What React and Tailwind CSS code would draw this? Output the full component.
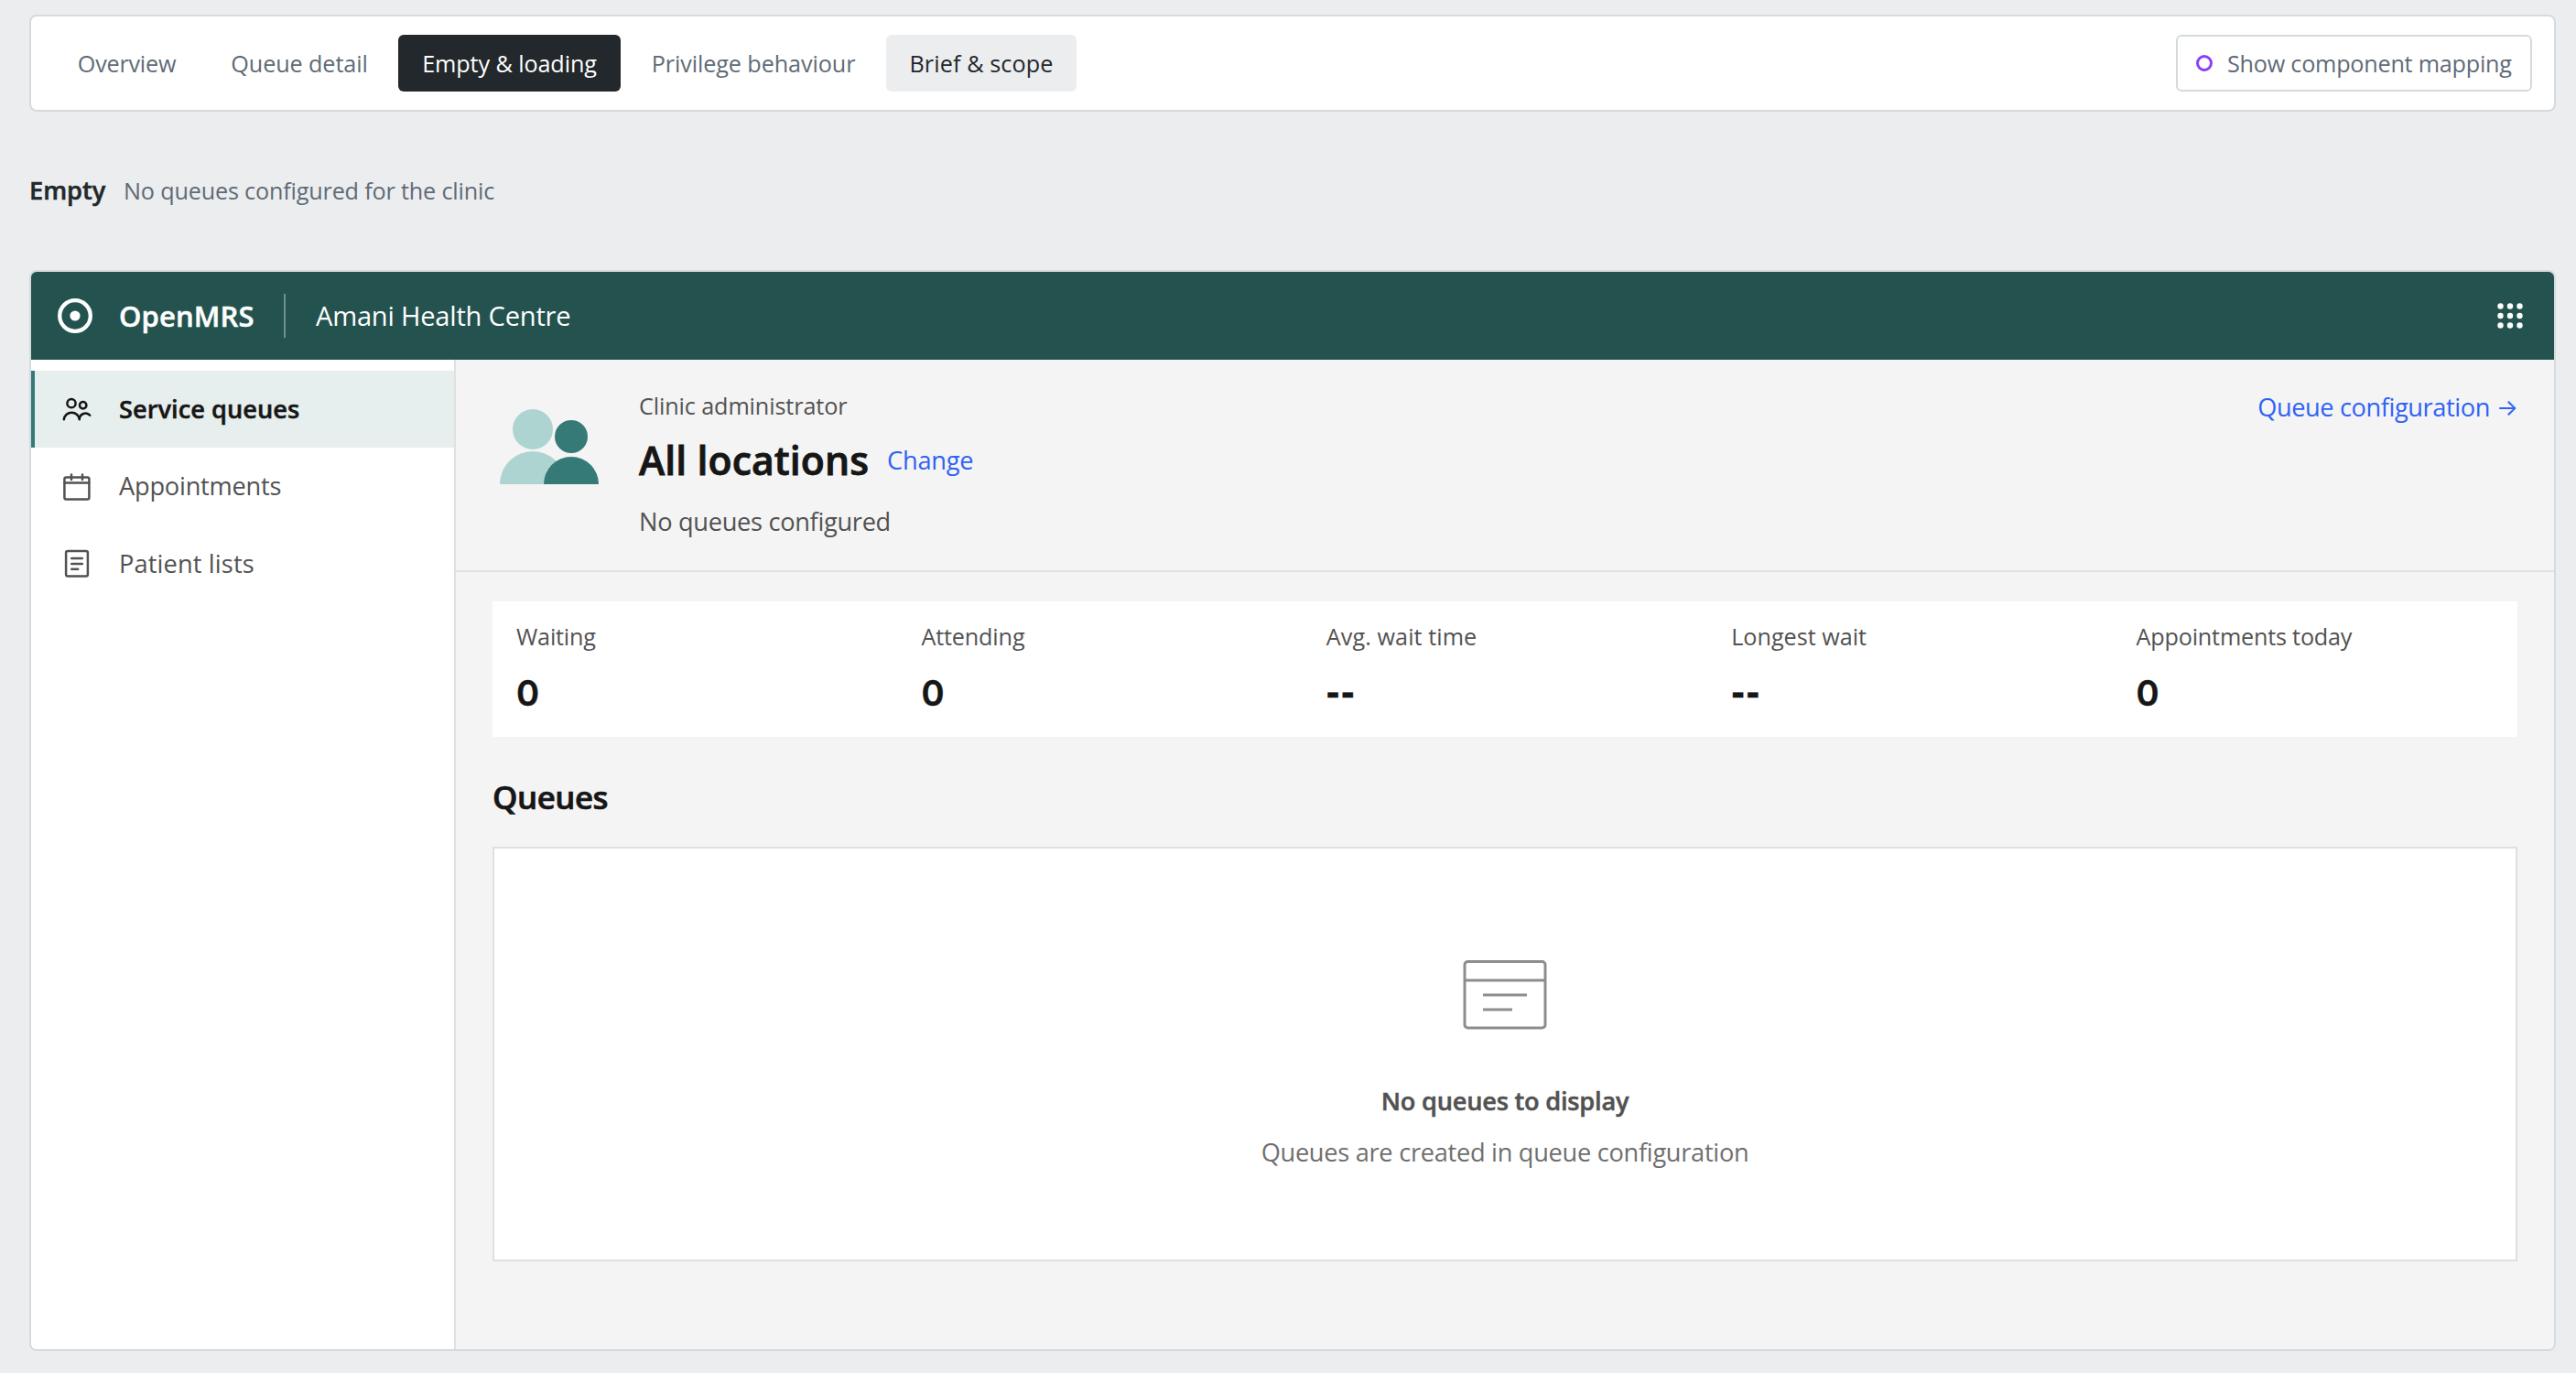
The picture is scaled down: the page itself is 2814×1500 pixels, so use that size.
import React from "react";

const tabs = [
  { label: "Overview", box: "w-[161px] text-[#5f6b76] tracking-[-0.23px]" },
  { label: "Queue detail", box: "w-[204px] text-[#5f6b76] tracking-[-0.1px]" },
  { label: "Empty & loading", box: "w-[243px] bg-[#22282b] text-white tracking-[-0.1px]" },
  { label: "Privilege behaviour", box: "w-[278px] text-[#5f6b76] tracking-[-0.09px]" },
  { label: "Brief & scope", box: "w-[208px] bg-[#ecedef] text-[#22282b] tracking-[0.1px]" },
];

const metrics = [
  { label: "Waiting", value: "0", track: "tracking-[-0.18px]" },
  { label: "Attending", value: "0", track: "tracking-[-0.15px]" },
  { label: "Avg. wait time", value: "--", track: "tracking-[0.07px]" },
  { label: "Longest wait", value: "--", track: "tracking-[-0.01px]" },
  { label: "Appointments today", value: "0", track: "tracking-[-0.2px]" },
];

function PeopleIcon() {
  return (
    <svg className="size-9 shrink-0" viewBox="0 0 36 36" fill="none" stroke="currentColor" strokeWidth="2.5" strokeLinecap="round">
      <circle cx="12" cy="11.7" r="4.6" />
      <circle cx="24.7" cy="13.7" r="3.7" />
      <path d="M3.8 29.2A8.6 8.9 0 0 1 20.8 29.2" />
      <path d="M20.8 28C21.6 23.4 27.4 20.4 32.2 24.6" />
    </svg>
  );
}

function CalendarIcon() {
  return (
    <svg className="size-9 shrink-0" viewBox="0 0 36 36" fill="none" stroke="currentColor" strokeWidth="2.5" strokeLinecap="round">
      <rect x="4.4" y="8.4" width="27" height="24.2" rx="2" />
      <path d="M4.4 14.6h27M12 5.4v5.6M24 5.4v5.6" />
    </svg>
  );
}

function ListIcon() {
  return (
    <svg className="size-9 shrink-0" viewBox="0 0 36 36" fill="none" stroke="currentColor" strokeWidth="2.5" strokeLinecap="round">
      <rect x="6.1" y="5.1" width="23.8" height="27.5" rx="2" />
      <path d="M12.2 13h11.6M12.2 19h11.6M12.2 24.8h7" />
    </svg>
  );
}

function Illustration() {
  return (
    <svg className="h-[112px] w-[128px] shrink-0" viewBox="0 0 128 112">
      <g fill="#aed4d1">
        <circle cx="44" cy="44" r="22" />
        <path d="M8 104a36 36 0 0 1 72 0z" />
      </g>
      <g fill="#367a78">
        <circle cx="86" cy="52" r="18" />
        <path d="M56 104a30 30 0 0 1 60 0z" />
      </g>
    </svg>
  );
}

function TopBar() {
  return (
    <nav className="flex h-[106px] items-center justify-between rounded-lg border-2 border-[#d5dade] bg-white pr-6 pl-6 text-[25.2px]">
      <div className="flex gap-1.5">
        {tabs.map((t) => (
          <div key={t.label} className={`flex h-[62px] items-center justify-center rounded-md pt-0.5 whitespace-nowrap ${t.box}`}>
            {t.label}
          </div>
        ))}
      </div>
      <div className="flex h-[62px] w-[389px] items-center rounded-md border-2 border-[#d5dade] pl-5 tracking-[-0.23px] whitespace-nowrap text-[#5f6b76]">
        <span className="mr-4 size-[18px] rounded-full border-[3px] border-[#8a3ffc]" />
        <span className="pt-0.5">Show component mapping</span>
      </div>
    </nav>
  );
}

function AppHeader() {
  return (
    <header className="flex h-24 items-center bg-[#24534f] pr-[30px] pl-7 text-white">
      <svg className="size-10 shrink-0" viewBox="0 0 40 40">
        <circle cx="20" cy="20" r="16.8" fill="none" stroke="#fff" strokeWidth="4.3" />
        <circle cx="20" cy="20" r="5.6" fill="#fff" />
      </svg>
      <span className="ml-7 w-[148px] text-[31px] font-semibold tracking-[0.13px] whitespace-nowrap [-webkit-text-stroke:0.5px]">OpenMRS</span>
      <span className="ml-8 h-12 w-0.5 bg-[#70908d]" />
      <span className="ml-[33px] pt-0.5 text-[29.1px] tracking-[-0.21px] whitespace-nowrap">Amani Health Centre</span>
      <svg className="ml-auto size-9" viewBox="0 0 36 36" fill="#fff">
        {[7.5, 18, 28.5].map((y) => [7.5, 18, 28.5].map((x) => <circle key={`${x}-${y}`} cx={x} cy={y} r="3.2" />))}
      </svg>
    </header>
  );
}

function Sidebar() {
  return (
    <aside className="w-[464px] shrink-0 border-r-2 border-[#e0e0e0] bg-white pt-3 text-[27.2px] text-[#525252]">
      <div className="flex h-[84px] items-center gap-7 border-l-4 border-[#367a78] bg-[#e6efed] pl-7 font-semibold tracking-[0.04px] text-[#161616] [-webkit-text-stroke:0.5px]">
        <PeopleIcon />
        Service queues
      </div>
      <div className="flex h-[84px] items-center gap-7 pl-8 tracking-[-0.21px]">
        <CalendarIcon />
        Appointments
      </div>
      <div className="flex h-[84px] items-center gap-7 pl-8 tracking-[0.14px]">
        <ListIcon />
        <span className="pt-0.5">Patient lists</span>
      </div>
    </aside>
  );
}

function Main() {
  return (
    <main className="flex-1 bg-[#f4f4f4]">
      <div className="flex h-[232px] items-start border-b-2 border-[#e0e0e0] px-10 pt-8">
        <Illustration />
        <div className="ml-8 whitespace-nowrap text-[#525252]">
          <div className="text-[25.2px] leading-[36px] tracking-[-0.11px]">Clinic administrator</div>
          <div className="mt-3.5 flex h-14 items-center">
            <h1 className="w-[271px] text-[42.7px] leading-[56px] font-semibold tracking-[0.1px] text-[#161616] [-webkit-text-stroke:0.9px]">All locations</h1>
            <a className="text-[27.2px] leading-10 tracking-[-0.21px] text-[#2f62f6]">Change</a>
          </div>
          <div className="mt-[19px] text-[27.2px] leading-10 tracking-[-0.3px]">No queues configured</div>
        </div>
        <a className="ml-auto flex text-[27.2px] leading-10 tracking-[-0.4px] whitespace-nowrap text-[#2f62f6]">
          Queue configuration
          <span className="ml-[7px] w-[23px] font-['Inter'] text-[25px] tracking-normal">→</span>
        </a>
      </div>

      <div className="px-10">
        <div className="mt-8 grid h-[148px] grid-cols-5 bg-white pt-5">
          {metrics.map((m) => (
            <div key={m.label} className="pl-[26px]">
              <div className={`text-[25.2px] leading-[36px] text-[#525252] ${m.track}`}>{m.label}</div>
              {m.value === "0" ? (
                <div className="mt-[18px] font-['Inter'] text-[38px] leading-[52px] font-semibold text-[#161616] [-webkit-text-stroke:0.5px]">{m.value}</div>
              ) : (
                <div className="mt-[17px] font-['Liberation_Sans'] text-[44px] leading-[52px] font-bold tracking-[1.6px] text-[#161616] [-webkit-text-stroke:0.4px]">{m.value}</div>
              )}
            </div>
          ))}
        </div>

        <h2 className="mt-[42px] text-[34.9px] leading-[48px] font-semibold tracking-[-0.49px] text-[#161616] [-webkit-text-stroke:0.7px]">Queues</h2>

        <section className="mt-[30px] flex h-[453px] flex-col items-center border-2 border-[#e0e0e0] bg-white pt-[116px] text-[27.2px] leading-10">
          <svg className="h-[90px] w-24" viewBox="0 0 96 90" fill="none" stroke="#8d8d8d" strokeWidth="3">
            <rect x="4" y="7.5" width="88" height="72.5" rx="3.5" />
            <path d="M4 28h88M24 44h48M24 60h32" />
          </svg>
          <p className="mt-[50px] font-semibold tracking-[-0.22px] text-[#525252] [-webkit-text-stroke:0.5px]">No queues to display</p>
          <p className="mt-4 tracking-[-0.28px] text-[#6f6f6f]">Queues are created in queue configuration</p>
        </section>
      </div>
    </main>
  );
}

export default function App() {
  return (
    <div className="h-[1500px] overflow-hidden bg-[#ecedef] pt-4 pr-[22px] pl-8 font-['Open_Sans',sans-serif]">
      <TopBar />
      <div className="mt-[66px] flex h-10 items-baseline gap-[20px] leading-10 whitespace-nowrap">
        <h3 className="w-[83px] text-[27.2px] font-semibold text-[#22282b] [-webkit-text-stroke:0.5px]">Empty</h3>
        <p className="text-[25.2px] tracking-[-0.17px] text-[#5f6b76]">No queues configured for the clinic</p>
      </div>
      <div className="mt-[67px] flex h-[1181px] flex-col overflow-hidden rounded-lg border-2 border-[#d5dade]">
        <AppHeader />
        <div className="flex flex-1">
          <Sidebar />
          <Main />
        </div>
      </div>
    </div>
  );
}
